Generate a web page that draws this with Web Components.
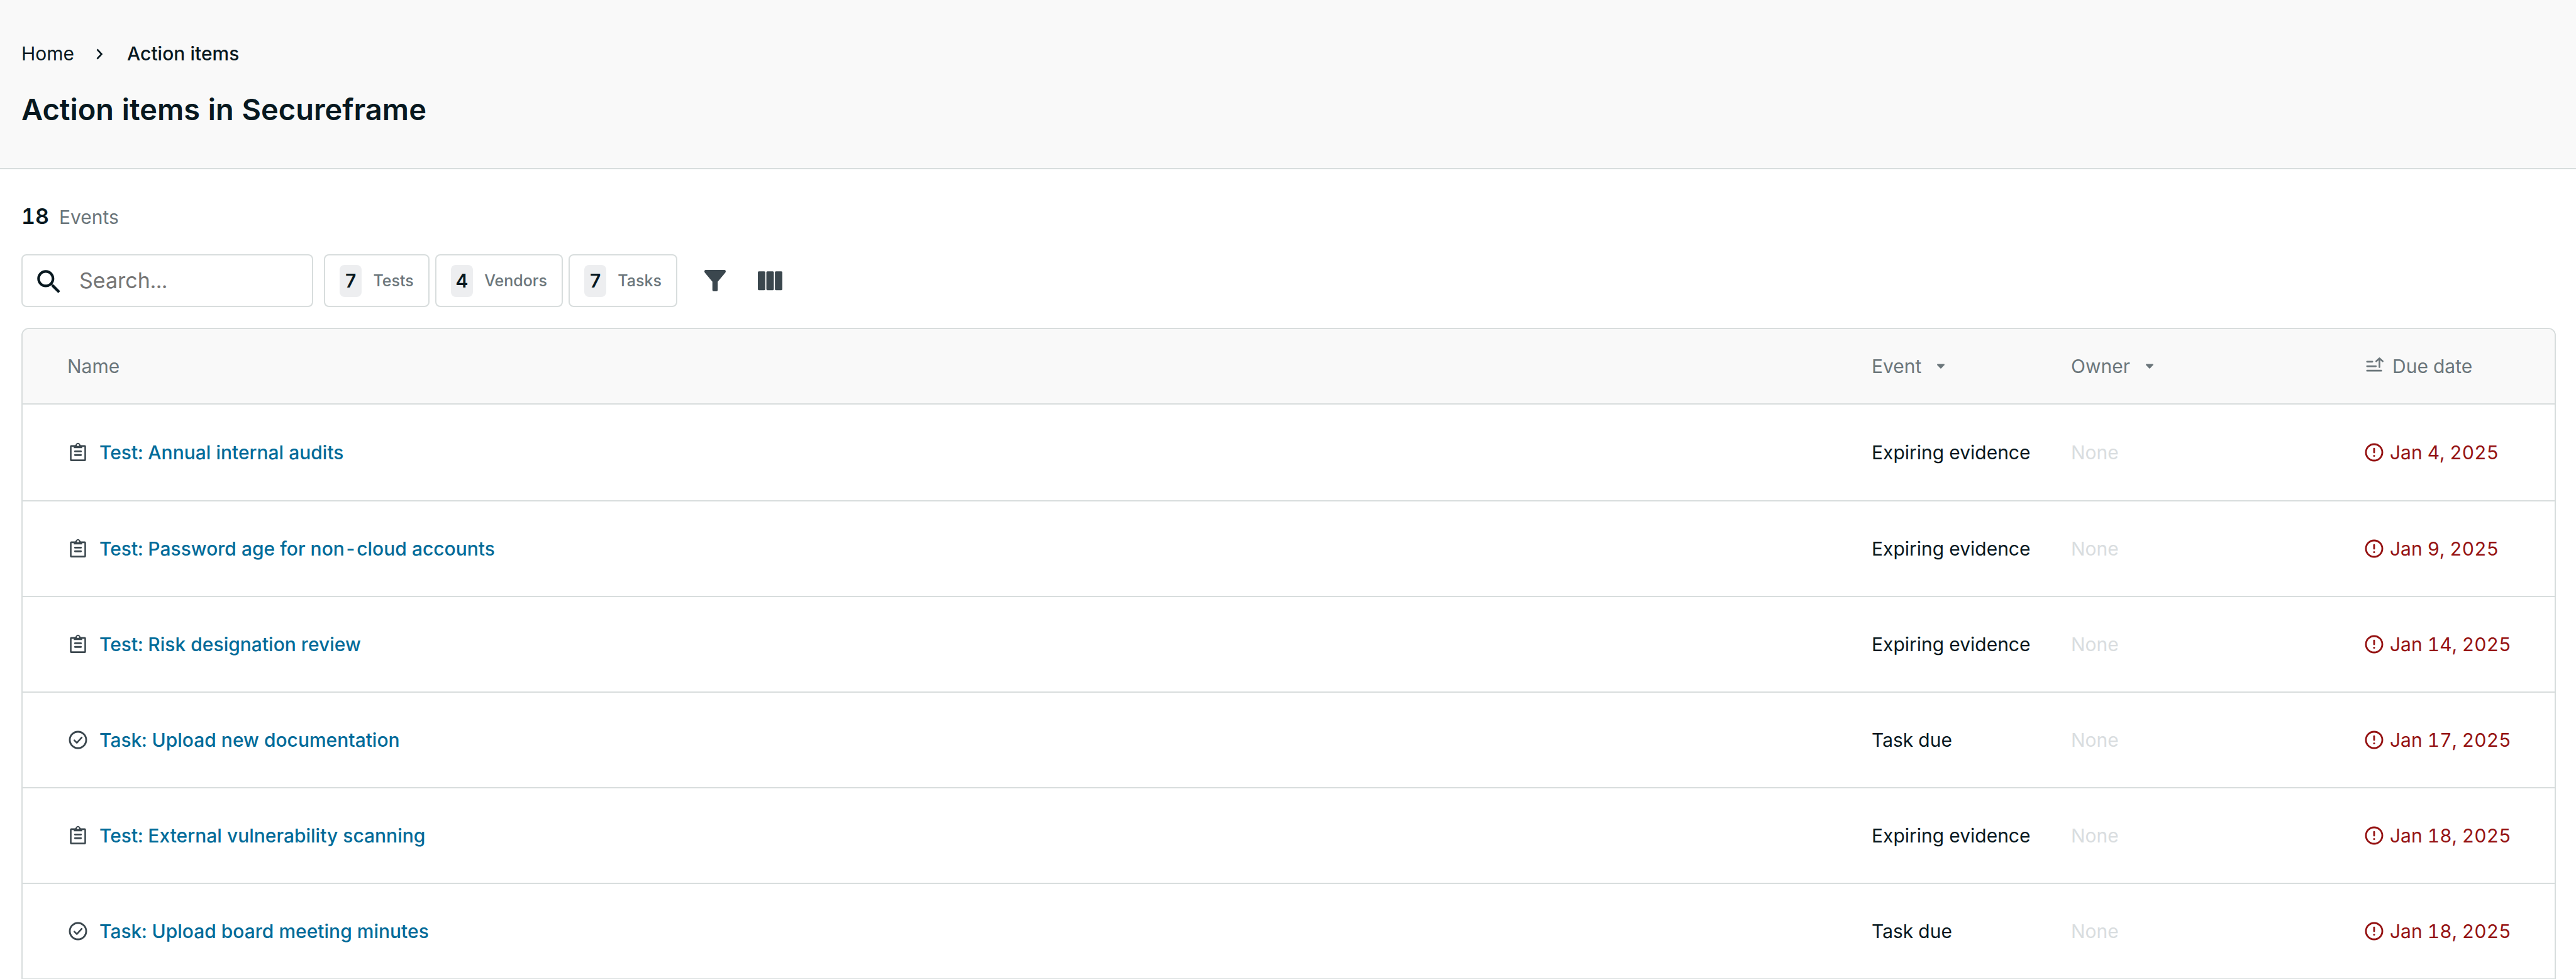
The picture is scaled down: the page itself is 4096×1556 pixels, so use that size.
<!DOCTYPE html>
<html lang="en">
<head>
<meta charset="utf-8">
<title>Action items</title>
<style>
  body { margin: 0; background: #fff; }
</style>
</head>
<body>
<action-items-page></action-items-page>

<script>
const ICONS = {
  chevron: ['0 0 34 34', '<path d="M11.5 10.5 18.5 18 11.5 25.5" fill="none" stroke="currentColor" stroke-width="2.6"/>'],
  search: ['0 -1 24 24', '<path fill="currentColor" d="M15.5 14h-.79l-.28-.27C15.41 12.59 16 11.11 16 9.5 16 5.91 13.09 3 9.5 3S3 5.91 3 9.5 5.91 16 9.5 16c1.61 0 3.09-.59 4.23-1.57l.27.28v.79l5 4.99L20.49 19l-4.99-5zm-6 0C7.01 14 5 11.99 5 9.5S7.01 5 9.5 5 14 7.01 14 9.5 11.99 14 9.5 14z"/>'],
  filter: ['0 0 40 40', '<path fill="currentColor" d="M2 0H38Q40 .3 40 2.500 40 4 39 5.200L25 22V37.500Q25 40 22.500 40H17.500Q15 40 15 37.500V22L1 5.200Q0 4 0 2.500 0 .3 2 0Z"/>'],
  columns: ['0 0 46 40', '<g fill="currentColor"><rect x="0" y="2.500" width="14" height="35.500" rx="2"/><rect x="16" y="2.500" width="14" height="35.500" rx="2"/><rect x="32" y="2.500" width="14" height="35.500" rx="2"/></g>'],
  caret: ['0 0 34 34', '<path fill="currentColor" d="M11.800 13.500H22.200Q23.600 13.900 22.600 15.200L17.700 20.400Q17 21.100 16.300 20.400L11.400 15.200Q10.400 13.900 11.800 13.500Z"/>'],
  sort: ['0 0 34 34', '<g fill="none" stroke="currentColor" stroke-width="2.700" stroke-linecap="round" stroke-linejoin="round"><path d="M5.800 9.800H14.200M5.800 17.100H19.800M5.800 24.200H28.400"/><path d="M25.500 18.500V5M20.300 9.200 25.500 4.500 30.700 9.200"/></g>'],
  test: ['0 0 24 24', '<path fill="currentColor" fill-rule="evenodd" d="M4.500 3.800H8.600C9.200 3.500 9.500 3.200 9.800 2.600A2.500 2.500 0 0 1 14.200 2.600C14.500 3.200 14.800 3.500 15.400 3.800H19.500A1.500 1.500 0 0 1 21 5.300V20.400A1.500 1.500 0 0 1 19.500 21.900H4.500A1.500 1.500 0 0 1 3 20.400V5.300A1.500 1.500 0 0 1 4.500 3.800ZM4.800 5.900V20H19.200V5.900H16.700V7.200H7.300V5.900ZM12 2.700A1.150 1.150 0 1 0 12 5 1.150 1.150 0 0 0 12 2.700Z"/><path d="M8.700 10.900H15.300M8.700 15H15.300" stroke="currentColor" stroke-width="2" stroke-linecap="round"/>'],
  task: ['0 0 24 24', '<circle cx="12" cy="12" r="9.200" fill="none" stroke="currentColor" stroke-width="2"/><path d="M7.900 12.500 10.700 15.300 16.200 9.300" fill="none" stroke="currentColor" stroke-width="1.800" stroke-linecap="round" stroke-linejoin="round"/>'],
  alert: ['0 0 24 24', '<circle cx="12" cy="12" r="9.200" fill="none" stroke="currentColor" stroke-width="2"/><path d="M12 7.900V12" stroke="currentColor" stroke-width="2" stroke-linecap="round"/><circle cx="12" cy="15.900" r="1.100" fill="currentColor"/>']
};

class UiIcon extends HTMLElement {
  connectedCallback() {
    if (this.shadowRoot) return;
    const [box, body] = ICONS[this.getAttribute('name')];
    this.attachShadow({ mode: 'open' }).innerHTML = `
      <style>
        :host { display: block; flex: none; width: 34px; height: 34px; }
        svg { display: block; width: 100%; height: 100%; }
      </style>
      <svg viewBox="${box}" aria-hidden="true">${body}</svg>`;
  }
}

class PageHeader extends HTMLElement {
  connectedCallback() {
    this.attachShadow({ mode: 'open' }).innerHTML = `
      <style>
        :host { display: block; padding: 67px 32px 63px 34px; background: #f9f9f9; border-bottom: 2px solid var(--line); }
        nav { display: flex; align-items: center; gap: 25px; height: 36px; line-height: 36px; }
        a { color: inherit; text-decoration: none; }
        span { font-weight: 500; }
        h1 { margin: 41px 0 0; font-size: 47px; line-height: 60px; font-weight: 600; }
      </style>
      <nav aria-label="Breadcrumb">
        <a href="#home">Home</a><ui-icon name="chevron"></ui-icon><span aria-current="page">Action items</span>
      </nav>
      <h1><slot></slot></h1>`;
  }
}

class CountChip extends HTMLElement {
  connectedCallback() {
    this.attachShadow({ mode: 'open' }).innerHTML = `
      <style>
        :host { display: block; }
        button { display: flex; align-items: center; gap: 18px; box-sizing: border-box; height: 84px; margin: 0; padding: 0 23px;
          border: 2px solid var(--line); border-radius: 8px; background: #fff; color: var(--muted);
          font: inherit; font-size: 25px; font-weight: 500; }
        b { padding: 0 8px; border-radius: 8px; background: #edeef0; color: var(--ink);
          font-size: 30px; line-height: 51px; font-weight: 600; }
      </style>
      <button type="button"><b>${this.getAttribute('count')}</b><slot></slot></button>`;
  }
}

class ListToolbar extends HTMLElement {
  connectedCallback() {
    this.attachShadow({ mode: 'open' }).innerHTML = `
      <style>
        :host { display: flex; align-items: center; gap: 9px; }
        label { display: flex; align-items: center; gap: 23px; box-sizing: border-box; width: 464px; height: 84px; margin-right: 8px;
          padding: 0 17px; border: 2px solid var(--line); border-radius: 8px; }
        label ui-icon { width: 50px; height: 50px; }
        input { flex: 1; min-width: 0; padding: 0; border: 0; outline: 0; background: none; color: inherit; font: inherit; font-size: 34px; }
        input::placeholder { color: #757575; opacity: 1; }
        .actions { display: flex; align-items: center; gap: 51px; margin-left: 34px; color: var(--icon); }
        .actions button { display: block; padding: 0; border: 0; background: none; color: inherit; }
        .wide { width: 39px; }
      </style>
      <label><ui-icon name="search"></ui-icon><input type="search" placeholder="Search..." aria-label="Search"></label>
      <count-chip count="7">Tests</count-chip>
      <count-chip count="4">Vendors</count-chip>
      <count-chip count="7">Tasks</count-chip>
      <div class="actions">
        <button type="button" aria-label="Filter"><ui-icon name="filter"></ui-icon></button>
        <button type="button" aria-label="Columns"><ui-icon class="wide" name="columns"></ui-icon></button>
      </div>`;
  }
}

class ActionTable extends HTMLElement {
  connectedCallback() {
    const rows = [
      ['test', 'Test: Annual internal audits', 'Expiring evidence', 'Jan 4, 2025'],
      ['test', 'Test: Password age for non-cloud accounts', 'Expiring evidence', 'Jan 9, 2025'],
      ['test', 'Test: Risk designation review', 'Expiring evidence', 'Jan 14, 2025'],
      ['task', 'Task: Upload new documentation', 'Task due', 'Jan 17, 2025'],
      ['test', 'Test: External vulnerability scanning', 'Expiring evidence', 'Jan 18, 2025'],
      ['task', 'Task: Upload board meeting minutes', 'Task due', 'Jan 18, 2025']
    ];
    this.attachShadow({ mode: 'open' }).innerHTML = `
      <style>
        :host { display: block; border: 2px solid var(--line); border-radius: 12px 12px 0 0; overflow: hidden; }
        table { width: 100%; table-layout: fixed; border-collapse: separate; border-spacing: 0; }
        th, td { box-sizing: border-box; height: 152px; padding: 0; border-bottom: 2px solid var(--line); text-align: left; vertical-align: middle; }
        th { height: 120px; background: #f9f9f9; color: var(--muted); font-weight: 400; }
        th:first-child, td:first-child { padding-left: 71px; }
        tbody tr:first-child td { height: 154px; }
        .event { width: 317px; }
        .owner { width: 465px; }
        .due { width: 304px; }
        button { display: flex; align-items: center; gap: 14px; padding: 0; border: 0; background: none; color: inherit; font: inherit; }
        .due button { gap: 12px; }
        .name, .date { display: flex; align-items: center; gap: 17px; }
        .name ui-icon { color: var(--icon); }
        .date { gap: 8px; color: #951212; }
        .none { color: #d9dddf; }
        a { color: #006b99; font-weight: 500; text-decoration: none; }
      </style>
      <table>
        <thead><tr>
          <th scope="col">Name</th>
          <th scope="col" class="event"><button type="button">Event<ui-icon name="caret"></ui-icon></button></th>
          <th scope="col" class="owner"><button type="button">Owner<ui-icon name="caret"></ui-icon></button></th>
          <th scope="col" class="due"><button type="button"><ui-icon name="sort"></ui-icon>Due date</button></th>
        </tr></thead>
        <tbody>${rows.map(([icon, name, event, date]) => `
          <tr>
            <td><div class="name"><ui-icon name="${icon}"></ui-icon><a href="#item">${name}</a></div></td>
            <td>${event}</td>
            <td class="none">None</td>
            <td><div class="date"><ui-icon name="alert"></ui-icon>${date}</div></td>
          </tr>`).join('')}
        </tbody>
      </table>`;
  }
}

class ActionItemsPage extends HTMLElement {
  connectedCallback() {
    this.attachShadow({ mode: 'open' }).innerHTML = `
      <style>
        :host { display: block; height: 100vh; overflow: hidden; background: #fff; color: var(--ink);
          font: 400 30px/36px Inter, sans-serif; font-variant-numeric: tabular-nums;
          --ink: #07181f; --muted: #6b767b; --icon: #3b474e; --line: #d8dddd; }
        main { padding: 53px 32px 0 34px; }
        .total { display: flex; align-items: baseline; gap: 16px; height: 44px; line-height: 44px; color: var(--muted); }
        .total b { color: var(--ink); font-size: 34px; font-weight: 600; }
        list-toolbar { margin: 38px 0 33px; }
      </style>
      <page-header>Action items in Secureframe</page-header>
      <main>
        <div class="total"><b>18</b><span>Events</span></div>
        <list-toolbar></list-toolbar>
        <action-table></action-table>
      </main>`;
  }
}

customElements.define('ui-icon', UiIcon);
customElements.define('page-header', PageHeader);
customElements.define('count-chip', CountChip);
customElements.define('list-toolbar', ListToolbar);
customElements.define('action-table', ActionTable);
customElements.define('action-items-page', ActionItemsPage);
</script>
</body>
</html>
